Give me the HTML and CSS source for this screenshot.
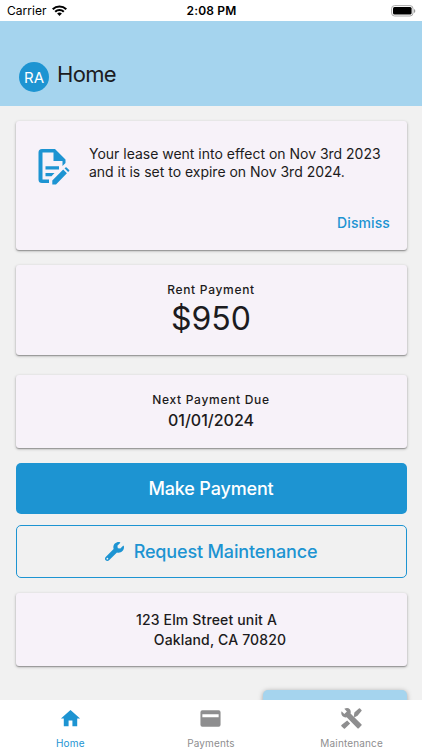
FILE: index.html
```html
<!DOCTYPE html>
<html lang="en">
<head>
<meta charset="utf-8">
<title>Home</title>
<link rel="stylesheet" href="styles.css">
</head>
<body>
<div class="status">
  <div class="carrier"><span>Carrier</span>
    <svg class="wifi" viewBox="0 0 15 11"><g fill="none" stroke="#000" stroke-width="2.1"><path d="M.7 4.2a9.8 9.8 0 0 1 13.6 0"/><path d="M3.2 6.8a6.2 6.2 0 0 1 8.6 0"/></g><path d="M5.1 8.6a3.6 3.6 0 0 1 4.8 0L7.5 11z"/></svg>
  </div>
  <div class="clock">2:08 PM</div>
  <svg class="battery" viewBox="0 0 25 12"><rect x=".6" y=".6" width="21.4" height="10.4" rx="3" fill="#fff" stroke="#aaa"/><rect x="2" y="2" width="18.6" height="7.6" rx="1.5"/><path d="M23 4v4q1.3-.7 1.3-2T23 4" fill="#999"/></svg>
</div>
<header class="header">
  <div class="avatar">RA</div>
  <h1>Home</h1>
</header>
<main class="content">
  <section class="card lease">
    <svg class="doc" viewBox="0 0 32 36" fill="#1d94d2"><path fill-rule="evenodd" d="M4 0H17L27.5 10.5V14L24.5 17V12H15.5V3.5H4.5V30.5H11V34H4Q.5 34 .5 30.5V3.5Q.5 0 4 0M7.5 17.3H21V20.5H7.5M7.5 24H16.5L13.5 27.2H7.5"/><path d="M14.3 31.4 25.2 20.6 28.9 24.2 18 35.5H14.3M26.5 19.3 27.5 18.4Q28 18 28.6 18.4L31.2 21Q31.6 21.5 31.2 22L30.1 23"/></svg>
    <div class="lease-body">
      <p>Your lease went into effect on Nov 3rd 2023<br>and it is set to expire on Nov 3rd 2024.</p>
      <a class="dismiss">Dismiss</a>
    </div>
  </section>
  <section class="card rent"><div class="label">Rent Payment</div><div class="amount">$950</div></section>
  <section class="card due"><div class="label">Next Payment Due</div><div class="date">01/01/2024</div></section>
  <div class="button primary">Make Payment</div>
  <div class="button outline">
    <svg class="wrench" viewBox="0 0 512 512" fill="#1d94d2"><path d="M507.73 109.1c-2.24-9.03-13.54-12.09-20.12-5.51l-74.36 74.36-67.88-11.31-11.31-67.88 74.36-74.36c6.62-6.62 3.43-17.9-5.66-20.16-47.38-11.74-99.55.91-136.58 37.93-39.64 39.64-50.55 97.1-34.05 147.2L18.74 402.76c-24.99 24.99-24.99 65.51 0 90.5 24.99 24.99 65.51 24.99 90.5 0l213.21-213.21c50.12 16.71 107.47 5.68 147.37-34.22 37.07-37.07 49.7-89.32 37.91-136.73zM64 472c-13.25 0-24-10.75-24-24 0-13.26 10.75-24 24-24s24 10.74 24 24c0 13.25-10.75 24-24 24z"/></svg>
    <span>Request Maintenance</span>
  </div>
  <section class="card address"><div class="street">123 Elm Street unit A</div><div class="city">Oakland, CA 70820</div></section>
  <div class="fab"></div>
</main>
<nav class="tabs">
  <div class="tab active"><svg viewBox="0 0 24 24"><path d="M10 20v-6h4v6h5v-8h3L12 3 2 12h3v8z"/></svg><span>Home</span></div>
  <div class="tab"><svg viewBox="0 0 24 24"><path fill-rule="evenodd" d="M3.5 3.5h17Q22.5 3.5 22.5 5.5v13q0 2-2 2h-17q-2 0-2-2v-13q0-2 2-2M3.5 7.5v3.3h17V7.5z"/></svg><span>Payments</span></div>
  <div class="tab"><svg viewBox="0 0 24 24"><path d="M1.7 4.4 4.5 7.2 7.2 4.6 4.5 1.8Q8-.2 10.3 2.4 11.7 4.2 11 6.7L22.3 18Q23 18.7 22.3 19.4L19.6 22.1Q18.9 22.8 18.2 22.1L7 10.8Q4.3 11.3 2.5 9.5.6 7.2 1.7 4.4M7.5 14.2 10.6 17.3 5.2 22.5Q4.6 23 4 22.5L1.5 20Q1 19.4 1.5 18.9M15.3 10.6 14.4 9.7 15 5.8 19.7 1.6Q20.3 1.1 20.9 1.6L22.4 3.1Q22.9 3.7 22.4 4.3L18.3 9 15.3 10.6"/></svg><span>Maintenance</span></div>
</nav>
</body>
</html>
```
FILE: styles.css
```css
* { box-sizing: border-box; }
body { margin: 0; width: 422px; height: 750px; overflow: hidden; display: flex; flex-direction: column; background: #f1f1f1; font-family: Inter, "Liberation Sans", sans-serif; color: #1c1b20; }
svg { display: block; flex: none; }
.status { height: 21px; flex: none; display: grid; grid-template-columns: 1fr auto 1fr; align-items: center; padding: 0 6px 0 7px; background: #fff; color: #000; font-size: 12px; line-height: 20px; }
.carrier { display: flex; align-items: center; gap: 5px; letter-spacing: .05px; }
.wifi { width: 15px; height: 11px; }
.clock { font-weight: 600; letter-spacing: .15px; }
.battery { width: 25px; height: 12px; justify-self: end; }
.header { height: 85px; flex: none; display: flex; align-items: flex-start; gap: 8px; padding: 40px 19px 0; background: #a5d4ee; }
.avatar { width: 30px; height: 30px; margin-top: 1px; border-radius: 50%; background: #1d94d2; color: #fff; font-size: 15px; line-height: 31px; text-align: center; }
h1 { margin: 0; font-size: 22px; line-height: 26px; font-weight: 400; letter-spacing: -.7px; }
.content { flex: 1; min-height: 0; overflow: hidden; padding: 15px 15px 0; display: flex; flex-direction: column; }
.card { flex: none; margin: 0 0 15px .5px; width: 391px; background: #f7f2f9; border-radius: 3px; box-shadow: 0 1px 3px rgba(0,0,0,.3), 0 1px 1px rgba(0,0,0,.22); text-align: center; }
.lease { height: 129px; display: flex; padding: 24px 16.5px 0 22px; text-align: left; }
.doc { width: 32px; height: 36px; margin-top: 4px; }
.lease-body { flex: 1; margin-left: 19.5px; }
.lease p { margin: 0; font-size: 14px; line-height: 18px; letter-spacing: -.01px; white-space: nowrap; }
.dismiss { display: block; margin-top: 32px; text-align: right; font-size: 14px; line-height: 19px; font-weight: 500; letter-spacing: .1px; color: #1d94d2; }
.label { font-size: 12px; line-height: 16px; font-weight: 500; letter-spacing: .7px; }
.rent { height: 90px; padding-top: 17px; margin-bottom: 20px; }
.amount { font-size: 32px; line-height: 40px; margin-top: 1px; }
.due { height: 73px; padding-top: 17px; }
.date { font-size: 16px; line-height: 22px; margin-top: 1px; font-weight: 500; }
.button { flex: none; margin-left: .5px; width: 391px; border-radius: 5px; display: flex; align-items: center; justify-content: center; font-size: 18px; font-weight: 500; letter-spacing: -.15px; }
.primary { height: 51px; background: #1d94d2; color: #fff; margin-bottom: 11px; }
.outline { height: 53px; border: 1px solid #1d94d2; color: #1d94d2; gap: 10px; margin-bottom: 15px; }
.wrench { width: 19px; height: 19px; }
.address { height: 73px; padding-top: 17px; margin-bottom: 24px; font-size: 14px; line-height: 20px; font-weight: 500; letter-spacing: .15px; }
.street { padding-right: 9px; }
.city { padding-left: 18px; }
.fab { flex: none; align-self: flex-end; width: 144px; height: 50px; border-radius: 5px; background: #a5d4ee; box-shadow: 0 1px 5px rgba(0,0,0,.35); }
.tabs { position: relative; flex: none; height: 50px; display: grid; grid-template-columns: repeat(3, 1fr); background: #fff; }
.tab { display: flex; flex-direction: column; align-items: center; padding-top: 7px; color: #8e8e8f; fill: #8e8e8f; font-size: 10px; line-height: 14px; }
.tab svg { width: 23px; height: 23px; }
.tab span { margin-top: 6px; letter-spacing: .15px; }
.active { color: #1d94d2; fill: #1d94d2; }
```
